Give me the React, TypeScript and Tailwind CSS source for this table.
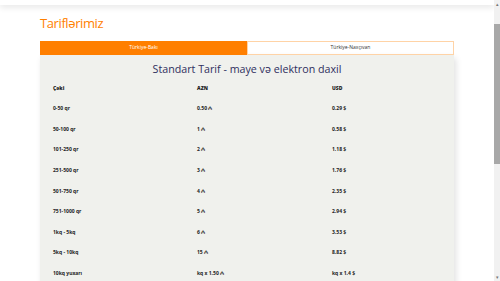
const rows: [string, string, string][] = [
  ["0-50 qr", "0.50 ₼", "0.29 $"],
  ["50-100 qr", "1 ₼", "0.58 $"],
  ["101-250 qr", "2 ₼", "1.18 $"],
  ["251-500 qr", "3 ₼", "1.76 $"],
  ["501-750 qr", "4 ₼", "2.35 $"],
  ["751-1000 qr", "5 ₼", "2.94 $"],
  ["1kq - 5kq", "6 ₼", "3.53 $"],
  ["5kq - 10kq", "15 ₼", "8.82 $"],
  ["10kq yuxarı", "kq x 1.50 ₼", "kq x 1.4 $"],
];

function Row({ cells, head }: { cells: [string, string, string]; head?: boolean }) {
  return (
    <div className="grid h-[20.6px] grid-cols-[144px_135px_1fr] items-center text-[5px] font-bold text-[#222]">
      {cells.map((c, i) => (
        <span key={i} className={head ? "font-extrabold" : ""}>
          {c}
        </span>
      ))}
    </div>
  );
}

export default function App() {
  return (
    <div className="flex h-[281px] w-[500px] overflow-hidden bg-white font-['Open_Sans',sans-serif]">
      <div className="flex-1">
        <div className="h-[5px] bg-white shadow-[0_2px_6px_rgba(0,0,0,0.12)]" />

        <div className="mx-auto w-[414px]">
          <h1 className="mt-[11px] mb-[11px] text-[13px] leading-[14px] font-medium tracking-[-0.4px] text-[#ff7f00]">
            Tariflərimiz
          </h1>

          <div className="flex h-[14px] text-[5px]">
            <div className="flex w-[207px] items-center justify-center bg-[#ff7f00] text-white">
              Türkiyə-Bakı
            </div>
            <div className="flex flex-1 items-center justify-center border border-[#ffd3a6] text-[#333]">
              Türkiyə-Naxçıvan
            </div>
          </div>

          <div className="rounded-br-[6px] bg-[#f0f1ed] px-[13px] pb-4 shadow-[2px_3px_6px_rgba(0,0,0,0.12)]">
            <h2 className="pt-[7px] pb-[2px] text-center text-[10.7px] leading-[14px] font-medium text-[#2f2f5e]">
              Standart Tarif - maye və elektron daxil
            </h2>
            <Row cells={["Çəki", "AZN", "USD"]} head />
            {rows.map((r) => (
              <Row key={r[0]} cells={r} />
            ))}
          </div>
        </div>
      </div>

      <div className="flex w-[6px] flex-col bg-[#f1f1f1]">
        <div className="flex h-[8px] items-center justify-center text-[5px] leading-none text-[#777]">▴</div>
        <div className="mt-[16px] h-[140px] bg-[#a8a8a8]" />
        <div className="flex-1" />
        <div className="flex h-[8px] items-center justify-center text-[5px] leading-none text-[#777]">▾</div>
      </div>
    </div>
  );
}
